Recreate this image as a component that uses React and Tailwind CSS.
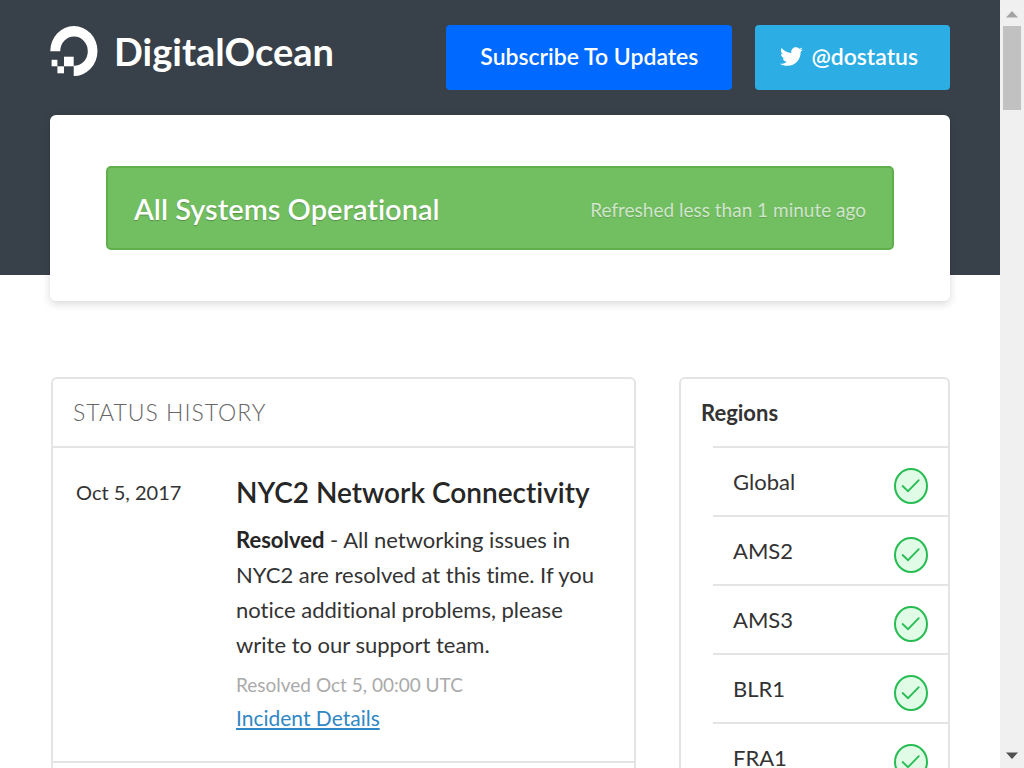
import { FaTwitter } from "react-icons/fa";

const regions = ["Global", "AMS2", "AMS3", "BLR1", "FRA1"];

function Logo() {
  return (
    <a href="#home" className="flex items-center gap-4 text-white">
      <svg viewBox="0 0 48 52" className="h-13 w-12" fill="currentColor" aria-hidden="true">
        <path d="M0.3 26.2 A23.6 25 0 1 1 23.7 51 V40.8 A13.8 14.6 0 1 0 10.2 26.2 Z" />
        <path d="M14 31.7 h9.7 v9.6 h-9.7 z" />
        <path d="M7.4 41.3 h6.6 v7 h-6.6 z" />
        <path d="M1.6 34.8 h5.8 v6.5 h-5.8 z" />
      </svg>
      <span className="text-[38px] leading-[52px] font-bold">DigitalOcean</span>
    </a>
  );
}

function CheckIcon() {
  return (
    <svg viewBox="0 0 34 36" className="h-9 w-[34px]" fill="none" stroke="#27bd53" strokeLinecap="round" role="img" aria-label="Operational">
      <ellipse cx="17" cy="18" rx="16" ry="17" fill="#e0fbe6" strokeWidth="2" />
      <path d="M8.6 18 L14 23.2 L24.8 12.2" strokeWidth="1.8" />
    </svg>
  );
}

function Scrollbar() {
  return (
    <div className="flex w-6 shrink-0 flex-col items-center bg-[#f0f0f0] py-2" aria-hidden="true">
      <svg viewBox="0 0 12 8" className="mt-0.5 h-2 w-3" fill="#a3a3a3">
        <path d="M0 7.5 L6 1 L12 7.5 Z" />
      </svg>
      <div className="mt-2 h-[84px] w-[18px] bg-[#c1c1c1]" />
      <svg viewBox="0 0 12 8" className="mt-auto h-2 w-3" fill="#505050">
        <path d="M0 0.5 L6 7 L12 0.5 Z" />
      </svg>
    </div>
  );
}

export default function App() {
  return (
    <div className="flex h-screen overflow-hidden bg-white font-['Lato',sans-serif] text-[#333] [font-variant-ligatures:none]">
      <div className="min-w-0 flex-1 overflow-hidden">
        <header className="flex items-start justify-between bg-[#384049] px-[50px] pt-[25px] pb-[185px]">
          <Logo />
          <div className="flex gap-[23px] text-[23px] leading-[63px] font-semibold text-white">
            <button type="button" className="rounded bg-[#0069ff] px-[34px] pb-0.5">
              Subscribe To Updates
            </button>
            <a href="#dostatus" className="flex items-center gap-2 rounded bg-[#2cade3] pr-8 pb-0.5 pl-[25px]">
              <FaTwitter className="size-[23px]" />
              @dostatus
            </a>
          </div>
        </header>

        <main className="-mt-40 px-[50px]">
          <section className="rounded-md bg-white px-14 py-[51px] shadow-[0_3px_8px_rgba(0,0,0,0.15)]">
            <div className="flex h-[84px] items-center justify-between rounded-[5px] border-2 border-[#60af4d] bg-[#72bf61] px-[26px] text-white">
              <h1 className="pt-0.5 text-[29px] font-semibold text-shadow-[0_1px_1px_rgba(0,0,0,0.25)]">All Systems Operational</h1>
              <span className="pt-1 text-[19px] text-white/70 text-shadow-[0_1px_1px_rgba(0,0,0,0.15)]">Refreshed less than 1 minute ago</span>
            </div>
          </section>

          <div className="mt-[76px] flex items-start gap-[43px] pl-px">
            <section className="min-w-0 flex-1 rounded-md border-2 border-[#e4e4e4]">
              <h2 className="px-5 text-[23px] leading-[67px] font-light tracking-[1px] text-[#666] uppercase">Status History</h2>
              <article className="flex border-y-2 border-[#e4e4e4] px-[23px] pt-[26px] pb-[27px]">
                <time dateTime="2017-10-05" className="w-40 shrink-0 text-[20px] leading-9">Oct 5, 2017</time>
                <div>
                  <h3 className="text-[28px] leading-9 font-semibold text-[#262626]">NYC2 Network Connectivity</h3>
                  <p className="mt-3 text-[22px] leading-[35px]">
                    <strong className="font-bold text-[#262626]">Resolved</strong> - All networking issues in NYC2 are resolved at this time. If you notice additional problems, please write to our support team.
                  </p>
                  <p className="mt-1.5 text-[19px] leading-[34px] text-[#aaa]">Resolved Oct 5, 00:00 UTC</p>
                  <a href="#incident" className="text-[21px] leading-8 text-[#3087c5] underline">Incident Details</a>
                </div>
              </article>
              <div className="h-20" />
            </section>

            <section className="w-[271px] shrink-0 rounded-md border-2 border-[#e4e4e4]">
              <h2 className="px-5 text-[22px] leading-[67px] font-bold">Regions</h2>
              <ul className="pl-8">
                {regions.map((name) => (
                  <li key={name} className="flex h-[69px] items-start justify-between border-t-2 border-[#e4e4e4] pt-5 pr-5 pl-5 text-[22px] leading-7">
                    {name}
                    <CheckIcon />
                  </li>
                ))}
              </ul>
            </section>
          </div>
        </main>
      </div>
      <Scrollbar />
    </div>
  );
}
